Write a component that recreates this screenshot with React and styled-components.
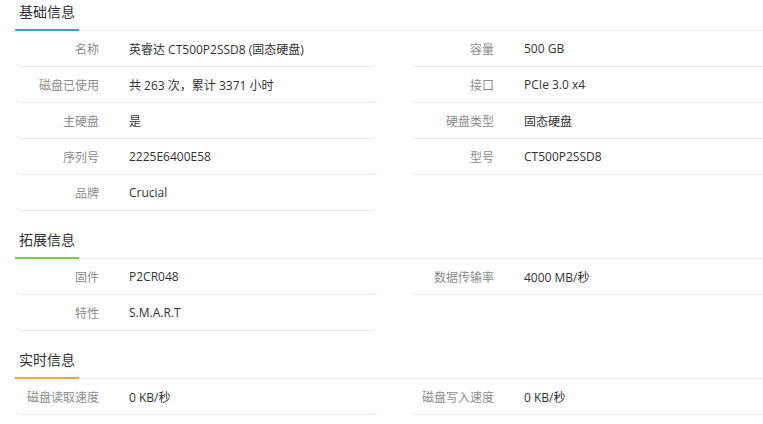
import React from 'react'
import styled, { createGlobalStyle } from 'styled-components'

const GlobalStyle = createGlobalStyle`
  html, body {
    margin: 0;
    padding: 0;
    background: #fff;
    overflow: hidden;
  }
  body {
    font-family: "Open Sans", "Noto Sans", "Noto Sans CJK SC", sans-serif;
  }
`

const Page = styled.div`
  width: 758px;
  padding-left: 15px;
`

const Section = styled.section`
  & + & {
    margin-top: 17px;
  }
`

const Header = styled.div`
  display: flex;
  height: 30px;
  border-bottom: 1px solid #ededed;
`

const Title = styled.div`
  width: 64px;
  padding-left: 4px;
  box-sizing: border-box;
  font-size: 14px;
  line-height: 24px;
  color: #303133;
  border-bottom: 2px solid ${(p) => p.$color};
  margin-bottom: -1px;
  height: 31px;
`

const Grid = styled.div`
  display: grid;
  grid-template-columns: 363px 363px;
  column-gap: 32px;
`

const Row = styled.div`
  display: flex;
  align-items: center;
  height: 35px;
  border-bottom: 1px solid #ebebeb;
  border-radius: 0 0 6px 6px;
  font-size: 12px;
`

const Label = styled.div`
  width: 84px;
  text-align: right;
  color: #8c8c8c;
  flex-shrink: 0;
`

const Value = styled.div`
  margin-left: 30px;
  color: #333;
`

const sections = [
  {
    title: '基础信息',
    color: '#4f95e0',
    rows: [
      ['名称', '英睿达 CT500P2SSD8 (固态硬盘)'],
      ['容量', '500 GB'],
      ['磁盘已使用', '共 263 次，累计 3371 小时'],
      ['接口', 'PCIe 3.0 x4'],
      ['主硬盘', '是'],
      ['硬盘类型', '固态硬盘'],
      ['序列号', '2225E6400E58'],
      ['型号', 'CT500P2SSD8'],
      ['品牌', 'Crucial'],
    ],
  },
  {
    title: '拓展信息',
    color: '#7ad03a',
    rows: [
      ['固件', 'P2CR048'],
      ['数据传输率', '4000 MB/秒'],
      ['特性', 'S.M.A.R.T'],
    ],
  },
  {
    title: '实时信息',
    color: '#f3a33c',
    rows: [
      ['磁盘读取速度', '0 KB/秒'],
      ['磁盘写入速度', '0 KB/秒'],
    ],
  },
]

const App = () => {
  return (
    <>
      <GlobalStyle />
      <Page>
        {sections.map((s) => (
          <Section key={s.title}>
            <Header>
              <Title $color={s.color}>{s.title}</Title>
            </Header>
            <Grid>
              {s.rows.map(([label, value]) => (
                <Row key={label}>
                  <Label>{label}</Label>
                  <Value>{value}</Value>
                </Row>
              ))}
            </Grid>
          </Section>
        ))}
      </Page>
    </>
  )
}

export default App
